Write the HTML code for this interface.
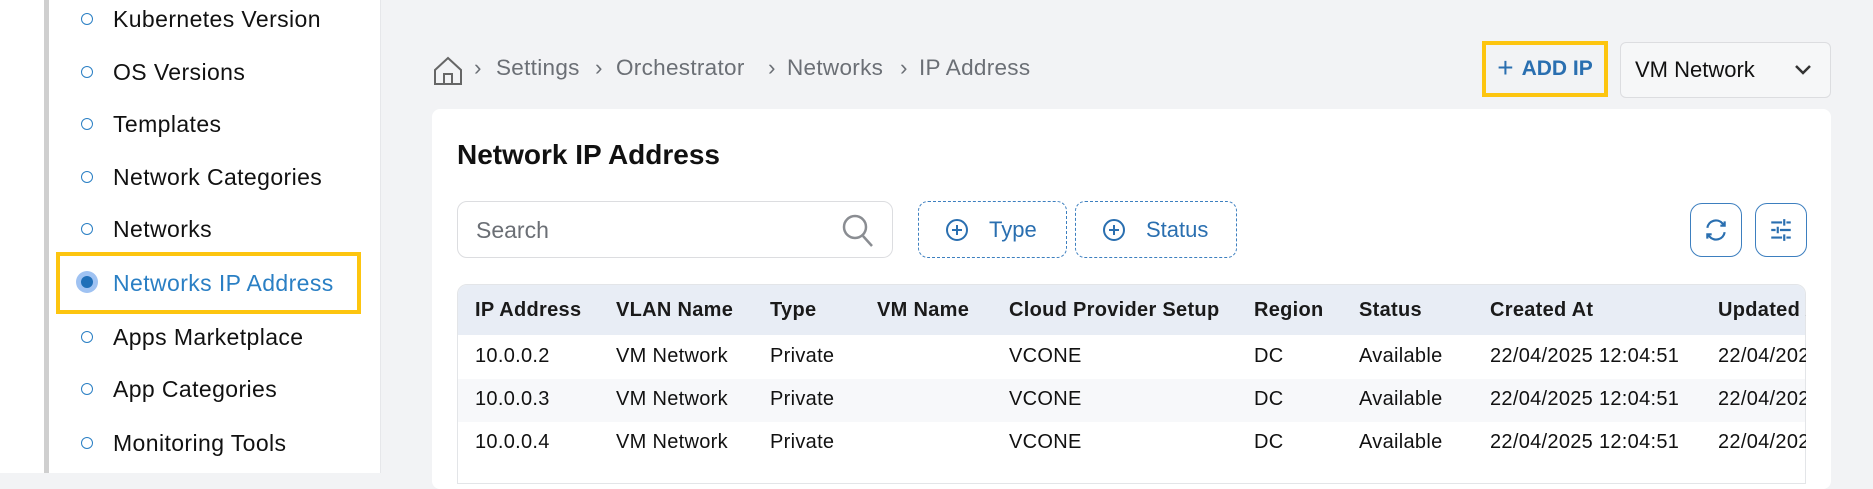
<!DOCTYPE html>
<html><head><style>
*{box-sizing:border-box;margin:0;padding:0}
body{width:1873px;height:473px;overflow:hidden;background:#f2f3f5;font-family:"Liberation Sans",sans-serif;position:relative;color:#111}
.side{position:absolute;left:0;top:0;width:381px;height:473px;background:#fff;border-right:1px solid #e6e7ea}
.bar{position:absolute;left:44px;top:0;width:5px;height:473px;background:#cfcfcf}
.it{position:absolute;left:113px;font-size:23px;letter-spacing:0.4px;line-height:26px;color:#111}
.dot{position:absolute;left:81px;width:12px;height:12px;border:1.5px solid #2a7fc4;border-radius:50%}
.hl{position:absolute;left:56px;top:252px;width:305px;height:62px;border:4px solid #fdc50f}
.abs{position:absolute}
.bc{position:absolute;top:55px;font-size:22.5px;letter-spacing:0.3px;color:#6b6f75}
.card{position:absolute;left:432px;top:109px;width:1399px;height:380px;background:#fff;border-radius:8px}
.th,.td{position:absolute;font-size:20px;letter-spacing:0.3px;white-space:nowrap}
.th{font-weight:bold;color:#1a1a1a}
.btn{position:absolute;top:201px;height:57px;border:1.5px dashed #3d7fbf;border-radius:10px;color:#2a6fb0;font-size:22px;display:flex;align-items:center;padding-left:26px;gap:20px}
.ib{position:absolute;top:203px;width:52px;height:54px;border:1.5px solid #3d7fbf;border-radius:12px;display:flex;align-items:center;justify-content:center}
</style></head><body>
<div class="side">
<div class="bar"></div>
<div class="dot" style="top:13px"></div><div class="it" style="top:6px">Kubernetes Version</div>
<div class="dot" style="top:66px"></div><div class="it" style="top:59px">OS Versions</div>
<div class="dot" style="top:118px"></div><div class="it" style="top:111px">Templates</div>
<div class="dot" style="top:171px"></div><div class="it" style="top:164px">Network Categories</div>
<div class="dot" style="top:223px"></div><div class="it" style="top:216px">Networks</div>
<div class="abs" style="left:76px;top:271px;width:22px;height:22px;border-radius:50%;background:#9fc2f2"></div>
<div class="abs" style="left:81px;top:276px;width:12px;height:12px;border-radius:50%;background:#1f6fb8"></div>
<div class="it" style="top:270px;color:#2a7fc4">Networks IP Address</div>
<div class="hl"></div>
<div class="dot" style="top:331px"></div><div class="it" style="top:324px">Apps Marketplace</div>
<div class="dot" style="top:383px"></div><div class="it" style="top:376px">App Categories</div>
<div class="dot" style="top:437px"></div><div class="it" style="top:430px">Monitoring Tools</div>
</div>

<svg class="abs" style="left:432px;top:55px" width="32" height="32" viewBox="0 0 32 32" fill="none" stroke="#666" stroke-width="2"><path d="M3 15 L16 3 L29 15 V29 H3 Z"/><path d="M12 29 V19 H20 V29"/></svg>
<div class="bc" style="left:474px">›</div>
<div class="bc" style="left:496px">Settings</div>
<div class="bc" style="left:595px">›</div>
<div class="bc" style="left:616px">Orchestrator</div>
<div class="bc" style="left:768px">›</div>
<div class="bc" style="left:787px">Networks</div>
<div class="bc" style="left:900px">›</div>
<div class="bc" style="left:919px">IP Address</div>

<div class="abs" style="left:1482px;top:41px;width:126px;height:56px;border:4px solid #fdc50f;color:#2a6fb0;font-weight:bold;font-size:21px;display:flex;align-items:center;justify-content:center;gap:8px"><span style="font-size:28px;font-weight:normal;margin-top:-3px">+</span>ADD IP</div>
<div class="abs" style="left:1620px;top:42px;width:211px;height:56px;border:1.5px solid #dcdde0;border-radius:6px;background:#f6f7f8;font-size:22px;display:flex;align-items:center;padding-left:14px">VM Network
<svg class="abs" style="left:172px;top:20px" width="20" height="14" viewBox="0 0 20 14" fill="none" stroke="#333" stroke-width="2.5"><path d="M3 3 L10 10 L17 3"/></svg></div>

<div class="card"></div>
<div class="abs" style="left:457px;top:139px;font-size:28px;font-weight:bold;color:#111">Network IP Address</div>
<div class="abs" style="left:457px;top:201px;width:436px;height:57px;border:1.5px solid #dcdde0;border-radius:10px;font-size:23px;color:#6b6f75;padding:15px 18px">Search
<svg class="abs" style="left:382px;top:10px" width="36" height="38" viewBox="0 0 36 38" fill="none" stroke="#8a8d92" stroke-width="2.5"><circle cx="15" cy="15" r="11"/><path d="M23 24 L32 34"/></svg></div>
<div class="btn" style="left:918px;width:149px"><svg width="24" height="24" viewBox="0 0 24 24" fill="none" stroke="#2a6fb0" stroke-width="2"><circle cx="12" cy="12" r="10"/><path d="M12 7v10M7 12h10"/></svg>Type</div>
<div class="btn" style="left:1075px;width:162px"><svg width="24" height="24" viewBox="0 0 24 24" fill="none" stroke="#2a6fb0" stroke-width="2"><circle cx="12" cy="12" r="10"/><path d="M12 7v10M7 12h10"/></svg>Status</div>
<div class="ib" style="left:1690px"><svg width="26" height="26" viewBox="0 0 24 24" fill="none" stroke="#2a6fb0" stroke-width="2"><path d="M4 10a8 8 0 0 1 14-4l2 2M20 4v4h-4M20 14a8 8 0 0 1-14 4l-2-2M4 20v-4h4"/></svg></div>
<div class="ib" style="left:1755px"><svg width="26" height="26" viewBox="0 0 24 24" fill="none" stroke="#2a6fb0" stroke-width="2"><path d="M3 5h10M17 5h4M15 2v6M3 12h4M11 12h10M9 9v6M3 19h10M17 19h4M15 16v6"/></svg></div>

<div class="abs" style="left:457px;top:284px;width:1349px;height:200px;border:1px solid #e3e5e8;border-radius:10px 10px 0 0;overflow:hidden">
<div class="abs" style="left:0;top:0;width:100%;height:50px;background:#e8edf5"></div>
<div class="abs" style="left:0;top:94px;width:100%;height:43px;background:#f7f8fa"></div>
</div>
<div class="th" style="left:475px;top:299px">IP Address</div>
<div class="th" style="left:616px;top:299px">VLAN Name</div>
<div class="th" style="left:770px;top:299px">Type</div>
<div class="th" style="left:877px;top:299px">VM Name</div>
<div class="th" style="left:1009px;top:299px">Cloud Provider Setup</div>
<div class="th" style="left:1254px;top:299px">Region</div>
<div class="th" style="left:1359px;top:299px">Status</div>
<div class="th" style="left:1490px;top:299px">Created At</div>
<div class="th" style="left:1718px;top:299px;width:88px;overflow:hidden">Updated At</div>
<div style="position:absolute;left:0;top:345px;width:1806px">
<div class="td" style="left:475px">10.0.0.2</div><div class="td" style="left:616px">VM Network</div><div class="td" style="left:770px">Private</div><div class="td" style="left:1009px">VCONE</div><div class="td" style="left:1254px">DC</div><div class="td" style="left:1359px">Available</div><div class="td" style="left:1490px">22/04/2025 12:04:51</div><div class="td" style="left:1718px;width:88px;overflow:hidden">22/04/2025</div>
</div>
<div style="position:absolute;left:0;top:388px;width:1806px">
<div class="td" style="left:475px">10.0.0.3</div><div class="td" style="left:616px">VM Network</div><div class="td" style="left:770px">Private</div><div class="td" style="left:1009px">VCONE</div><div class="td" style="left:1254px">DC</div><div class="td" style="left:1359px">Available</div><div class="td" style="left:1490px">22/04/2025 12:04:51</div><div class="td" style="left:1718px;width:88px;overflow:hidden">22/04/2025</div>
</div>
<div style="position:absolute;left:0;top:431px;width:1806px">
<div class="td" style="left:475px">10.0.0.4</div><div class="td" style="left:616px">VM Network</div><div class="td" style="left:770px">Private</div><div class="td" style="left:1009px">VCONE</div><div class="td" style="left:1254px">DC</div><div class="td" style="left:1359px">Available</div><div class="td" style="left:1490px">22/04/2025 12:04:51</div><div class="td" style="left:1718px;width:88px;overflow:hidden">22/04/2025</div>
</div>
</body></html>
